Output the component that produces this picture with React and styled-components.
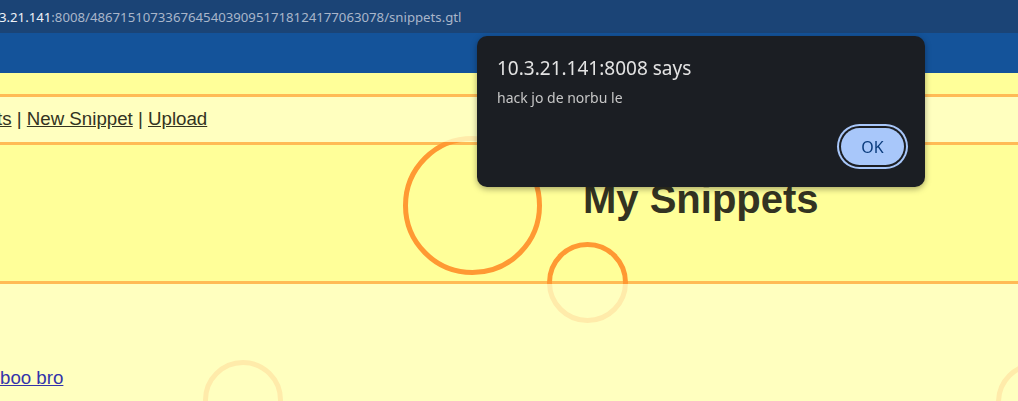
import React from "react";
import styled, { createGlobalStyle } from "styled-components";

const GlobalStyle = createGlobalStyle`
  html, body {
    margin: 0;
    padding: 0;
    background: #ffff99;
    overflow: hidden;
  }
  body {
    font-family: "Liberation Sans", Arial, sans-serif;
  }
`;

const App = () => {
  return (
    <>
      <GlobalStyle />
      <AddressBar>
        <Host>3.21.141</Host>
        <Path>:8008/486715107336764540390951718124177063078/snippets.gtl</Path>
      </AddressBar>
      <Toolbar />
      <Page>
        <TopStrip />
        <Nav>
          <NavLink href="#">ts</NavLink>
          <Sep> | </Sep>
          <NavLink href="#">New Snippet</NavLink>
          <Sep> | </Sep>
          <NavLink href="#">Upload</NavLink>
        </Nav>
        <Header>
          <Title>My Snippets</Title>
        </Header>
        <Content>
          <SnippetLink href="#">boo bro</SnippetLink>
        </Content>
        <Ring $x={403} $y={63} $size={139} />
        <Ring $x={547} $y={169} $size={81} />
        <Ring $x={203} $y={287} $size={80} />
        <Ring $x={996} $y={289} $size={80} />
      </Page>
      <Dialog role="alertdialog">
        <DialogTitle>10.3.21.141:8008 says</DialogTitle>
        <DialogMessage>hack jo de norbu le</DialogMessage>
        <DialogActions>
          <OkButton>OK</OkButton>
        </DialogActions>
      </Dialog>
    </>
  );
};

const AddressBar = styled.div`
  height: 33px;
  background: #1b4476;
  display: flex;
  align-items: center;
  font-family: "Noto Sans", sans-serif;
  font-size: 13.2px;
  white-space: nowrap;
  overflow: hidden;
`;

const Host = styled.span`
  color: #eef1f6;
  margin-left: -1px;
`;

const Path = styled.span`
  color: #a9b6ca;
`;

const Toolbar = styled.div`
  height: 40px;
  background: #14539a;
`;

const Page = styled.div`
  position: relative;
  background: #ffff99;
  height: 328px;
  overflow: hidden;
  display: flex;
  flex-direction: column;
`;

const TopStrip = styled.div`
  height: 21px;
  border-bottom: 3px solid #ffbb55;
`;

const Nav = styled.div`
  position: relative;
  z-index: 1;
  height: 45px;
  box-sizing: border-box;
  padding-top: 11px;
  padding-left: 0;
  background: rgba(255, 255, 200, 0.8);
  font-size: 18.7px;
  line-height: 21.5px;
  color: #333322;
  white-space: nowrap;
`;

const NavLink = styled.a`
  color: #333322;
  text-decoration: underline;
  &:first-child {
    margin-left: -3px;
  }
`;

const Sep = styled.span`
  white-space: pre;
`;

const Header = styled.div`
  height: 136px;
  box-sizing: content-box;
  border-top: 3px solid #ffbb55;
  border-bottom: 3px solid #ffbb55;
  padding-left: 583px;
`;

const Title = styled.h1`
  margin: 0;
  padding-top: 31px;
  font-size: 40px;
  line-height: 46px;
  font-weight: bold;
  color: #333322;
`;

const Content = styled.div`
  position: relative;
  z-index: 1;
  flex: 1;
  padding-top: 83px;
  background: rgba(255, 255, 200, 0.8);
  font-size: 18.7px;
  line-height: 21.5px;
`;

const SnippetLink = styled.a`
  color: #3333aa;
  text-decoration: underline;
`;

const Ring = styled.div`
  position: absolute;
  z-index: 0;
  left: ${(p) => p.$x}px;
  top: ${(p) => p.$y}px;
  width: ${(p) => p.$size}px;
  height: ${(p) => p.$size}px;
  box-sizing: border-box;
  border: 5px solid #ff9933;
  border-radius: 50%;
`;

const Dialog = styled.div`
  position: fixed;
  z-index: 10;
  left: 477px;
  top: 36px;
  width: 448px;
  height: 151px;
  box-sizing: border-box;
  padding: 20px 21px 0 20px;
  background: #1b1e23;
  border-radius: 10px;
  box-shadow: 0 2px 6px rgba(0, 0, 0, 0.35);
  font-family: "Noto Sans", sans-serif;
  display: flex;
  flex-direction: column;
`;

const DialogTitle = styled.div`
  font-size: 19px;
  line-height: 24px;
  color: #e3e3e3;
`;

const DialogMessage = styled.div`
  margin-top: 8px;
  font-size: 14px;
  line-height: 20px;
  color: #c7c7c7;
`;

const DialogActions = styled.div`
  display: flex;
  justify-content: flex-end;
  margin-top: 20px;
`;

const OkButton = styled.button`
  width: 63px;
  height: 37px;
  border: none;
  border-radius: 999px;
  background: #a8c7fa;
  color: #0b3c7d;
  font-family: "Noto Sans", sans-serif;
  font-size: 16px;
  padding: 0;
  box-shadow: 0 0 0 2px #1b1e23, 0 0 0 4px #a8c7fa;
  cursor: pointer;
`;

export default App;
